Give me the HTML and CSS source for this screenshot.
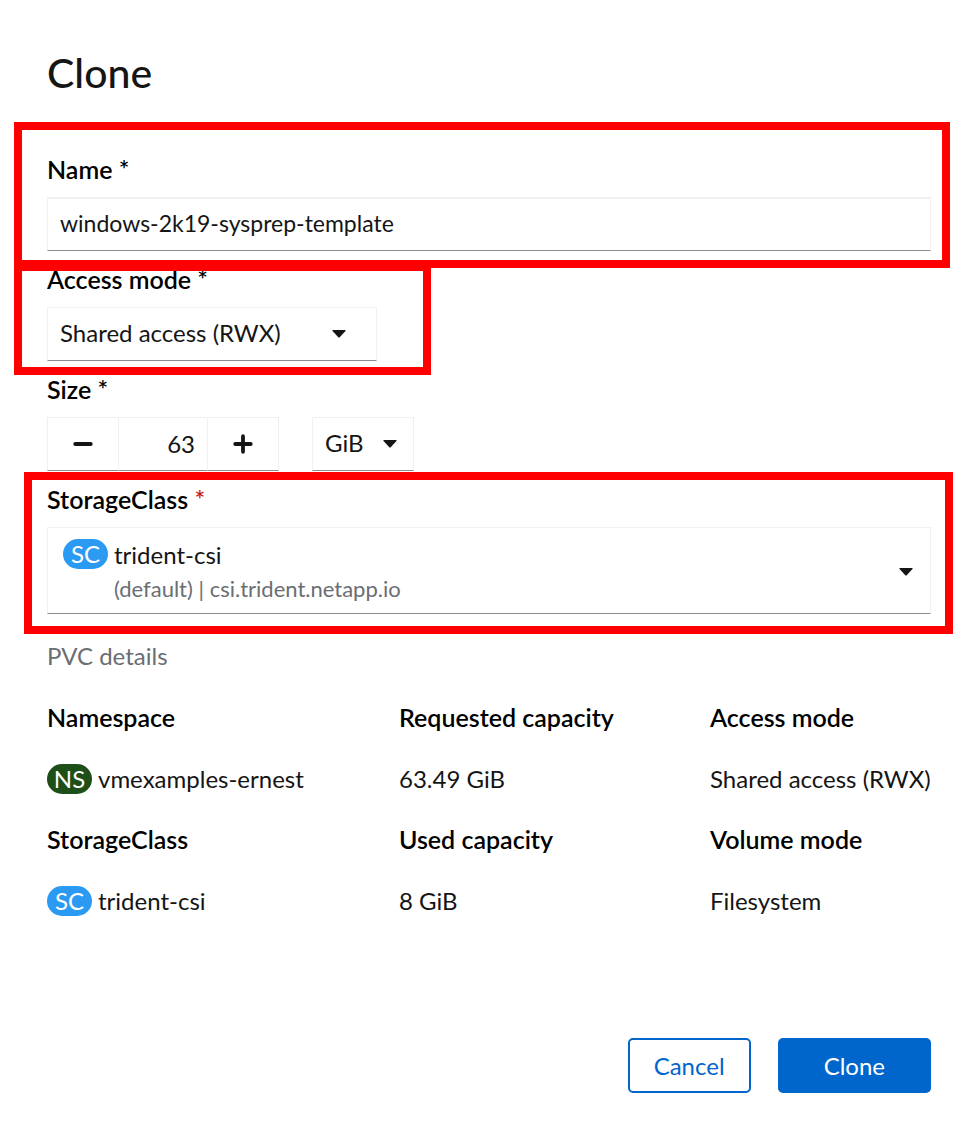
FILE: index.html
```html
<!DOCTYPE html>
<html lang="en">
<head>
<meta charset="utf-8">
<meta name="viewport" content="width=device-width, initial-scale=1">
<title>Clone</title>
<link rel="stylesheet" href="styles.css">
</head>
<body>
<main class="dialog">
  <h1 class="title">Clone</h1>
  <form class="form">
    <div class="field marked marked-name">
      <label class="label" for="name">Name *</label>
      <input class="control text-input" id="name" type="text" value="windows-2k19-sysprep-template">
    </div>
    <div class="field marked marked-access">
      <label class="label" for="access">Access mode *</label>
      <div class="select-wrap access-wrap">
        <select class="control select" id="access"><option>Shared access (RWX)</option></select>
        <svg class="caret" viewBox="0 0 14 8" aria-hidden="true"><path d="M1 0h12q1.200 0 .5 1L7.700 7.300q-.7.700-1.400 0L.5 1Q-.2 0 1 0z"/></svg>
      </div>
    </div>
    <div class="field">
      <label class="label" for="size">Size *</label>
      <div class="size-row">
        <div class="stepper">
          <button class="control step" type="button" aria-label="Decrease"><svg class="step-icon" viewBox="0 0 18 18" aria-hidden="true"><path d="M2 9h14"/></svg></button>
          <input class="control size-input" id="size" type="text" inputmode="numeric" value="63">
          <button class="control step" type="button" aria-label="Increase"><svg class="step-icon" viewBox="0 0 18 18" aria-hidden="true"><path d="M2 9h14M9 2v14"/></svg></button>
        </div>
        <div class="select-wrap unit-wrap">
          <select class="control select" aria-label="Size unit"><option>GiB</option></select>
          <svg class="caret" viewBox="0 0 14 8" aria-hidden="true"><path d="M1 0h12q1.200 0 .5 1L7.700 7.300q-.7.700-1.400 0L.5 1Q-.2 0 1 0z"/></svg>
        </div>
      </div>
    </div>
    <div class="field marked marked-storage">
      <label class="label" for="storage">StorageClass <span class="required">*</span></label>
      <button class="control storage" id="storage" type="button" aria-haspopup="listbox">
        <span class="badge badge-sc">SC</span>
        <span class="storage-text"><span>trident-csi</span><span class="muted storage-note">(default) | csi.trident.netapp.io</span></span>
        <svg class="caret-inline" viewBox="0 0 14 8" aria-hidden="true"><path d="M1 0h12q1.200 0 .5 1L7.700 7.300q-.7.700-1.400 0L.5 1Q-.2 0 1 0z"/></svg>
      </button>
    </div>
    <section class="details">
      <h2 class="details-title muted">PVC details</h2>
      <dl class="details-grid">
        <div class="item"><dt>Namespace</dt><dd><span class="badge badge-ns">NS</span>vmexamples-ernest</dd></div>
        <div class="item"><dt>Requested capacity</dt><dd>63.49 GiB</dd></div>
        <div class="item"><dt>Access mode</dt><dd>Shared access (RWX)</dd></div>
        <div class="item"><dt>StorageClass</dt><dd><span class="badge badge-sc">SC</span>trident-csi</dd></div>
        <div class="item"><dt>Used capacity</dt><dd>8 GiB</dd></div>
        <div class="item"><dt>Volume mode</dt><dd>Filesystem</dd></div>
      </dl>
    </section>
    <footer class="actions">
      <button class="btn btn-secondary" type="button">Cancel</button>
      <button class="btn btn-primary" type="submit">Clone</button>
    </footer>
  </form>
</main>
</body>
</html>
```
FILE: styles.css
```css
* { box-sizing: border-box; }

body {
  margin: 0;
  background: #fff;
  color: #151515;
  font-family: Lato, "Open Sans", sans-serif;
  font-size: 24px;
  line-height: 32px;
}

button, input, select { font: inherit; color: inherit; }

.dialog { padding: 50px 33px 34px 47px; }

.title {
  margin: 0 0 59px;
  font-size: 41px;
  font-weight: 500;
  line-height: 46px;
}

.form, .field { display: flex; flex-direction: column; }
.field { gap: 13px; margin-bottom: 14px; }
.label, dt { color: #000; font-size: 25px; font-weight: 600; line-height: 29px; }
.label { align-self: flex-start; }
.required { color: #c9190b; }
.muted { color: #6a6e73; }

.control {
  height: 54px;
  margin: 0;
  padding: 0 12px 2px;
  border: 1px solid #f0f0f0;
  border-bottom-color: #8a8d90;
  border-radius: 0;
  background: #fff;
}
.text-input { width: 100%; padding-bottom: 4px; border-top-width: 2px; font-size: 23px; }

/* Call-out frames drawn over the form */
.marked { position: relative; }
.marked::after {
  content: "";
  position: absolute;
  box-sizing: border-box;
  border: 8px solid #f00;
  pointer-events: none;
}
.marked-name::after { inset: -33px -19px -17px -33px; }
.marked-access::after { top: -2px; bottom: -14px; left: -33px; width: 417px; }
.marked-storage::after { inset: -13px -22px -20px -23px; }

.select-wrap { position: relative; }
.access-wrap { width: 330px; }
.unit-wrap { width: 102px; }
.select { width: 100%; appearance: none; }
.caret, .caret-inline { width: 14px; height: 8px; fill: #151515; }
.caret { position: absolute; top: 23px; pointer-events: none; }
.access-wrap .caret { right: 31px; }
.unit-wrap .caret { right: 17px; }

.size-row { display: flex; gap: 33px; }
.stepper { display: flex; }
.step { width: 72px; display: grid; place-items: center; padding-bottom: 0; }
.step-icon { width: 20px; height: 20px; fill: none; stroke: #151515; stroke-width: 3.4; stroke-linecap: round; }
.size-input { width: 88px; text-align: right; border-left: 0; border-right: 0; }

.storage {
  display: flex;
  align-items: flex-start;
  height: auto;
  padding: 11px 17px 8px 15px;
  text-align: left;
}
.storage-text { flex: 1; display: flex; flex-direction: column; gap: 2px; }
.storage-note { font-size: 22px; }
.caret-inline { align-self: center; }

.badge {
  display: inline-grid;
  place-items: center;
  flex: none;
  width: 45px;
  height: 30px;
  margin-right: 6px;
  border-radius: 15px;
  color: #fff;
  line-height: 28px;
}
.badge-sc { background: #2b9af3; }
.badge-ns { background: #1e4f18; }

.details { margin-top: 12px; }
.details-title { margin: 0 0 31px; font-size: 24px; font-weight: 400; }
.details-grid {
  display: grid;
  grid-template-columns: 352fr 311fr 221fr;
  row-gap: 30px;
  margin: 0;
}
.item { display: flex; flex-direction: column; gap: 31px; white-space: nowrap; }
dd { display: flex; align-items: center; margin: 0; color: #151515; }

.actions { display: flex; justify-content: flex-end; gap: 27px; margin-top: 121px; }
.btn {
  height: 55px;
  border: 2px solid #06c;
  border-radius: 5px;
  text-align: center;
}
.btn-secondary { min-width: 123px; padding: 0 24px; background: #fff; color: #06c; }
.btn-primary { min-width: 153px; padding: 0 44px; background: #06c; color: #fff; }
```
